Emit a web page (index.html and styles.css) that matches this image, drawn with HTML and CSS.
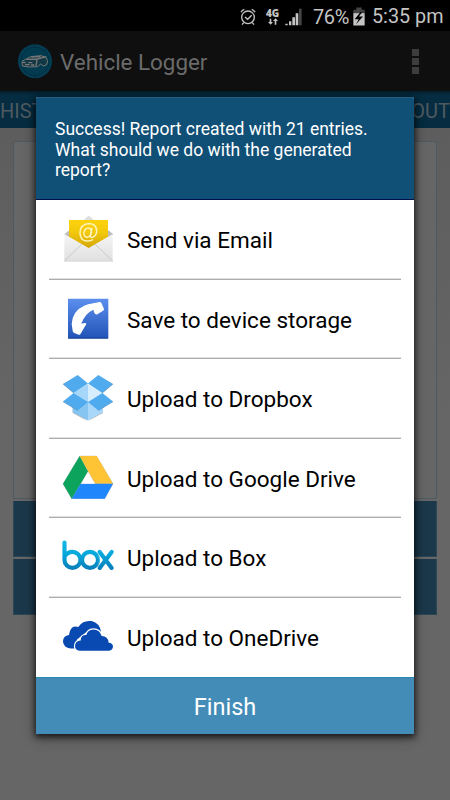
FILE: index.html
```html
<!DOCTYPE html>
<html lang="en">
<head>
<meta charset="utf-8">
<title>Vehicle Logger</title>
<link rel="stylesheet" href="styles.css">
</head>
<body>
<div class="screen">
  <header class="status">
    <svg class="alarm" viewBox="42 18 54 60"><g fill="none" stroke="#c4c4c4" stroke-width="4"><circle cx="69" cy="49" r="19"/><path d="M60 48l8 7 12-12M48 34q3-7 10-9M80 25q7 2 10 9M56 65l-5 6M82 65l5 6"/></g></svg>
    <span class="net"><b>4G</b><svg viewBox="0 0 30 21"><path d="M5 2h5v10h5l-7 8-8-8h5zM20 20h5V9h5l-7-8-8 8h5z" fill="#c4c4c4"/></svg></span>
    <svg class="signal" viewBox="180 22 51 54"><path fill="#c4c4c4" d="M181 69h7v5h-7zM192 62h7v12h-7zM202 50h8v24h-8zM212 38h8v36h-8z"/><path fill="#444" d="M222 24h8v50h-8z"/></svg>
    <span class="pct">76%</span>
    <svg class="battery" viewBox="384 20 36 56"><path fill="#444" d="M394 21h16v7h9v11h-34V28h9z"/><path fill="#c4c4c4" d="M385 38h34v37h-34z"/><path fill="#000" d="M407 34l-18 22h12l-8 15 21-23h-12l9-13z"/></svg>
    <span class="time">5:35 pm</span>
  </header>
  <div class="actionbar">
    <svg class="logo" viewBox="52 129 108 108"><circle cx="106" cy="184" r="51" fill="#043e54"/><circle cx="106" cy="184" r="43" fill="#023b50" stroke="#022838" stroke-width="2"/><path d="M106 132v8M106 228v8" stroke="#022838" stroke-width="2"/><path d="M67 184l11-6 15-8 31-3 14 5 6 10-3 12-10 4-8-6-9 8-25 1-21-3z" fill="#123845" stroke="#777" stroke-width="3"/><path d="M80 178l33-1 27-7M95 171l27-1M112 179l-3 19M68 187l10 1M86 188h12M76 194h14M94 195h10" fill="none" stroke="#777" stroke-width="4"/></svg>
    <h1>Vehicle Logger</h1>
    <div class="overflow"><i></i><i></i><i></i></div>
  </div>
  <nav class="tabs"><span>HISTORY</span><span>ABOUT</span></nav>
  <main class="content">
    <section class="panel"></section>
    <div class="action"></div>
    <div class="action"></div>
  </main>
  <div class="dialog">
    <div class="message">Success! Report created with 21 entries.<br>What should we do with the generated<br>report?</div>
    <ul class="options">
      <li>
        <svg viewBox="30 20.25 168 168"><defs><linearGradient id="y" x1="0" y1="0" x2="0" y2="1"><stop stop-color="#fdd20c"/><stop offset=".45" stop-color="#f2c80c"/><stop offset="1" stop-color="#d3a608"/></linearGradient><linearGradient id="e" x1="0" y1="0" x2="0" y2="1"><stop stop-color="#f5f5f5"/><stop offset="1" stop-color="#e0e0e0"/></linearGradient></defs><path d="M43 87l14-11h119l14 11-14 10H57z" fill="#bdbdbd"/><path d="M102 44l10-10q4-4 8 0l11 10z" fill="#dedede"/><path d="M57 44h117v50l-58 34-59-34z" fill="url(#y)"/><path d="M43 87l73 40 72-40v80H43z" fill="url(#e)"/><path d="M43 167l53-51M188 167l-54-51" stroke="#bbb" stroke-width="2"/><path d="M57 76v18l59 33 58-33V76" fill="url(#y)"/><path d="M44 168h144" stroke="#ccc" stroke-width="2"/><path d="M57 44h117v50l-58 34-59-34z" fill="url(#y)"/><g fill="none" stroke="#fff4bd" stroke-width="4.5"><ellipse cx="113" cy="82" rx="11" ry="14" transform="rotate(20 113 82)"/><path d="M126 68l-5 22q-1 9 7 6 12-5 12-18 0-22-23-23-27 2-27 29 1 24 24 23 8 0 15-4"/></g></svg>
        <span>Send via Email</span></li>
      <li>
        <svg viewBox="30 18.75 168 168"><defs><linearGradient id="p" x1="0" y1="0" x2="0" y2="1"><stop stop-color="#5b8eed"/><stop offset="1" stop-color="#2154b6"/></linearGradient></defs><path d="M54 42h121v119H54z" fill="url(#p)"/><path d="M55 160h119" stroke="#194393" stroke-width="3"/><path d="M126 56l23-4q4 0 6 4l7 17q1 4-3 5l-18 11q-5 1-8-4l-3-10q-25 11-36 42l10-2q4-1 5 3l-17 29q-2 4-6 3l-13-5q-4-2-5-6l-3-21q2-40 39-56 10-5 22-6z" fill="#fff"/></svg>
        <span>Save to device storage</span></li>
      <li>
        <svg viewBox="30 17.25 168 168"><path d="M68 130l45 38 46-38v13l-46 25-45-25z" fill="#777" opacity=".5"/><path d="M68 127l45-21 46 21v14l-46 24-45-24z" fill="#86c4f2"/><path d="M114 106l45 20v15l-45 24z" fill="#a9d7fa"/><path d="M71 83l43-27v54z" fill="#a6d6fa"/><path d="M114 56l43 27-43 27z" fill="#d6edfe"/><path d="M39 56l44-27 31 26-43 28zM189 56l-44-27-31 26 43 28zM39 109l32-26 43 27-31 26zM189 109l-32-26-43 27 31 26z" fill="#50aaee"/><path d="M39 56l32 27M189 56l-32 27M39 109l44 27M189 109l-44 27" stroke="#528db9" stroke-width="2"/></svg>
        <span>Upload to Dropbox</span></li>
      <li>
        <svg viewBox="30 15.75 168 168"><path d="M65 163L38 118 89 33h51l50 84-25 46z" fill="#888" opacity=".5"/><path d="M89 34l25 46-49 82-26-45z" fill="#0ca35c"/><path d="M89 34h51l49 83h-53z" fill="#ffc336"/><path d="M92 117h97l-25 45H65z" fill="#1f87fb"/><path d="M114 81l21 36H93z" fill="#fff"/></svg>
        <span>Upload to Google Drive</span></li>
      <li>
        <svg viewBox="30 14.25 168 168"><defs><linearGradient id="b" x1="0" y1="45" x2="0" y2="135" gradientUnits="userSpaceOnUse"><stop stop-color="#16b8e5"/><stop offset=".45" stop-color="#06a9db"/><stop offset="1" stop-color="#087bb9"/></linearGradient></defs><g fill="none" stroke="url(#b)" stroke-width="12.5" stroke-linecap="round" stroke-linejoin="round"><path d="M43.5 52v52a24 24 0 1 0 24-24q-15 0-24 14"/><circle cx="120" cy="104" r="24"/><path d="M149 80l36 48M185 80l-36 48"/></g><path d="M144 83q9 21 0 43" fill="none" stroke="#77cdeb" stroke-width="2"/></svg>
        <span>Upload to Box</span></li>
      <li>
        <svg viewBox="30 12.75 168 168"><g fill="#0849b2"><path d="M62 131h14l5-27 28-22 44-1q-4-26-28-32-27-4-40 18-24-8-28 24-18 2-18 20 2 18 23 20z"/><path stroke="#fff" stroke-width="7" paint-order="stroke" d="M89 138q-14-2-14-14 1-16 17-17 1-17 17-16 4-16 21-17 20 1 25 20 19 0 21 20 13 1 13 12-1 11-12 12z"/></g></svg>
        <span>Upload to OneDrive</span></li>
    </ul>
    <button class="finish">Finish</button>
  </div>
</div>
</body>
</html>
```
FILE: styles.css
```css
* { box-sizing: border-box; }
body { margin: 0; font-family: Roboto, "Liberation Sans", sans-serif; }
.screen { position: relative; width: 450px; height: 800px; overflow: hidden; display: flex; flex-direction: column; background: #666; }
.status { height: 31px; flex: none; display: flex; align-items: center; justify-content: flex-end; padding: 2px 8px 0 0; background: #000; color: #c4c4c4; white-space: nowrap; }
.alarm { width: 18px; height: 20px; margin-right: 8px; }
.net { width: 15px; margin-right: 5px; display: flex; flex-direction: column; align-items: center; font: 700 10px/10px "Open Sans", sans-serif; }
.net b { letter-spacing: -.2px; }
.net svg { width: 10px; height: 7px; }
.signal { width: 17px; height: 18px; margin-right: 11px; }
.pct { width: 37px; font-size: 20px; letter-spacing: -.4px; }
.battery { width: 12px; height: 19px; margin: 0 7px 0 3px; }
.time { width: 70px; font-size: 19.8px; }
.actionbar { height: 60px; flex: none; display: flex; align-items: center; padding: 0 31px 0 17px; background: #0f0f0f; color: #6b6b6b; }
.logo { width: 36px; height: 36px; }
h1 { margin: 1px auto 0 7px; font-size: 22.4px; font-weight: 400; white-space: nowrap; }
.overflow { display: grid; gap: 2px; }
.overflow i { width: 7px; height: 7px; background: #3d3d3d; }
.tabs { height: 37px; flex: none; display: flex; align-items: center; justify-content: space-between; padding: 2px 0 0; background: linear-gradient(#041d2b, #052c40 4px); color: #4e5a61; font-size: 20px; white-space: nowrap; }
.content { flex: 1; display: flex; flex-direction: column; gap: 2px; padding: 13px 13px 0; background: linear-gradient(#5d5d5d, #666 300px); }
.panel { height: 358px; border: 1px solid #4e5a61; border-radius: 3px 3px 0 0; background: #666; }
.action { height: 56px; background: #1b384a; border: 1px solid #2d4655; border-width: 0 1px 1px; }
.dialog { position: absolute; left: 36px; top: 97px; width: 378px; height: 637px; display: flex; flex-direction: column; background: #fff; border-radius: 2px 2px 0 0; box-shadow: 0 2px 6px 1px rgba(0,0,0,.7), 0 4px 14px rgba(0,0,0,.3); overflow: hidden; }
.message { height: 103px; flex: none; padding: 21px 19px; background: #104f76; border-top: 1px solid #245f84; border-bottom: 1px solid #00104d; color: #fff; font-size: 17.5px; line-height: 20.7px; white-space: nowrap; }
.options { flex: 1; display: flex; flex-direction: column; margin: 0; padding: 0 13px; list-style: none; }
.options li { flex: 1; position: relative; display: flex; align-items: center; gap: 11px; padding-left: 11px; font-size: 22.5px; color: #000; }
.options li + li { box-shadow: 0 -1px #adadad, 0 -2px #e0e0e0; }
.options svg { width: 56px; height: 56px; flex: none; }
.options span { padding-top: 1px; white-space: nowrap; }
.finish { height: 57px; flex: none; padding: 1px 0 0; border: 0; border-top: 1px solid #2b87b0; background: #438cb7; color: #fff; font: 400 23.5px Roboto, sans-serif; }
```
